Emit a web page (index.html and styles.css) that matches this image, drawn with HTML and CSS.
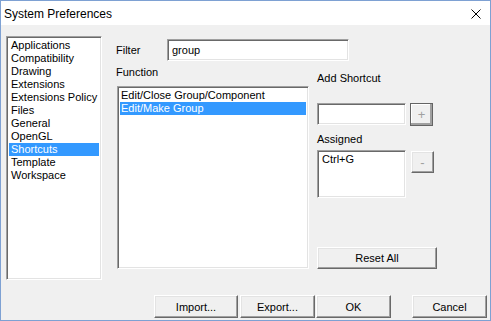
FILE: index.html
```html
<!DOCTYPE html>
<html>
<head>
  <meta charset="utf-8">
  <title>System Preferences</title>
  <link rel="stylesheet" href="styles.css">
</head>
<body>
<div class="window">
  <div class="titlebar">
    <span class="title">System Preferences</span>
    <svg class="close" width="10" height="10" viewBox="0 0 10 10">
      <path d="M0.5 0.5 L9.5 9.5 M9.5 0.5 L0.5 9.5" stroke="#000" stroke-width="1" fill="none"/>
    </svg>
  </div>
  <div class="content">
    <div class="top">
      <div class="listbox categories">
        <div class="item">Applications</div>
        <div class="item">Compatibility</div>
        <div class="item">Drawing</div>
        <div class="item">Extensions</div>
        <div class="item">Extensions Policy</div>
        <div class="item">Files</div>
        <div class="item">General</div>
        <div class="item">OpenGL</div>
        <div class="item selected">Shortcuts</div>
        <div class="item">Template</div>
        <div class="item">Workspace</div>
      </div>
      <div class="main">
        <div class="filter-row">
          <label class="filter-label" for="filter">Filter</label>
          <div class="textbox filter" id="filter">group</div>
        </div>
        <div class="columns">
          <div class="function-col">
            <div class="label function-label">Function</div>
            <div class="listbox functions">
              <div class="item">Edit/Close Group/Component</div>
              <div class="item selected">Edit/Make Group</div>
            </div>
          </div>
          <div class="shortcut-col">
            <div class="label add-label">Add Shortcut</div>
            <div class="shortcut-row">
              <div class="textbox shortcut"></div>
              <div class="button small default">+</div>
            </div>
            <div class="label assigned-label">Assigned</div>
            <div class="assigned-row">
              <div class="listbox assigned">
                <div class="item">Ctrl+G</div>
              </div>
              <div class="button small minus">-</div>
            </div>
            <div class="button reset">Reset All</div>
          </div>
        </div>
      </div>
    </div>
    <div class="buttons">
      <div class="button import">Import...</div>
      <div class="button export">Export...</div>
      <div class="button ok">OK</div>
      <div class="button cancel">Cancel</div>
    </div>
  </div>
</div>
</body>
</html>
```
FILE: styles.css
```css
* {
  box-sizing: border-box;
}
body {
  margin: 0;
  font-family: "Liberation Sans", Arial, sans-serif;
  font-size: 11px;
  color: #000;
  background: #fff;
}
.window {
  width: 491px;
  height: 321px;
  border: 1px solid #7ea1d3;
  display: flex;
  flex-direction: column;
  background: #f0f0f0;
}
.titlebar {
  height: 24px;
  background: #fff;
  display: flex;
  align-items: center;
  padding-left: 3px;
  padding-right: 9px;
}
.title {
  font-size: 12px;
  flex: 1;
  margin-top: 1px;
}
.close {
  display: block;
  margin-top: 1px;
}
.content {
  flex: 1;
  display: flex;
  flex-direction: column;
  padding: 11px 0 0 5px;
}
.top {
  display: flex;
}

/* sunken controls */
.listbox, .textbox {
  background: #fff;
  border: 1px solid;
  border-color: #a0a0a0 #fff #fff #a0a0a0;
  box-shadow: inset 1px 1px 0 #696969, inset -1px -1px 0 #e3e3e3;
  padding: 2px;
}
.item {
  line-height: 13px;
  height: 13px;
  padding-left: 2px;
  white-space: nowrap;
}
.item.selected {
  background: #3399ff;
  color: #fff;
}
.categories {
  width: 96px;
  height: 244px;
}
.main {
  margin-left: 14px;
  display: flex;
  flex-direction: column;
}
.filter-row {
  display: flex;
  align-items: center;
  margin-top: 3px;
}
.filter-label {
  width: 51px;
}
.textbox {
  line-height: 16px;
  padding-left: 4px;
}
.filter {
  width: 182px;
  height: 22px;
}
.label {
  line-height: 13px;
  height: 13px;
}
.columns {
  display: flex;
}
.function-col {
  width: 193px;
  display: flex;
  flex-direction: column;
}
.function-label {
  margin-top: 5px;
}
.functions {
  margin-top: 7px;
  margin-left: 1px;
  width: 192px;
  height: 183px;
}
.functions .item {
  padding-left: 1px;
}
.shortcut-col {
  margin-left: 8px;
  display: flex;
  flex-direction: column;
}
.add-label {
  margin-top: 11px;
}
.shortcut-row {
  display: flex;
  margin-top: 18px;
}
.shortcut {
  width: 89px;
  height: 22px;
}
.assigned-label {
  margin-top: 7px;
}
.assigned-row {
  display: flex;
  margin-top: 4px;
}
.assigned {
  width: 89px;
  height: 48px;
}

/* raised buttons */
.button {
  background: #f0f0f0;
  border: 1px solid;
  border-color: #fff #696969 #696969 #fff;
  box-shadow: inset -1px -1px 0 #a0a0a0, inset 1px 1px 0 #e3e3e3;
  display: flex;
  align-items: center;
  justify-content: center;
  height: 22px;
}
.small {
  width: 23px;
  color: #a0a0a0;
  font-size: 13px;
}
.default {
  height: 23px;
  margin-left: 4px;
  border-color: #646464;
  box-shadow: inset -2px -2px 0 #a0a0a0, inset 1px 1px 0 #fff;
}
.minus {
  margin-left: 5px;
  margin-top: 1px;
}
.reset {
  margin-top: auto;
  width: 120px;
}
.buttons {
  display: flex;
  margin-top: 15px;
  padding-left: 148px;
}
.buttons .button {
  width: 75px;
  height: 23px;
}
.buttons .import {
  width: 84px;
}
.buttons .export {
  margin-left: 2px;
}
.buttons .ok {
  margin-left: 1px;
}
.buttons .cancel {
  margin-left: 21px;
}
```
